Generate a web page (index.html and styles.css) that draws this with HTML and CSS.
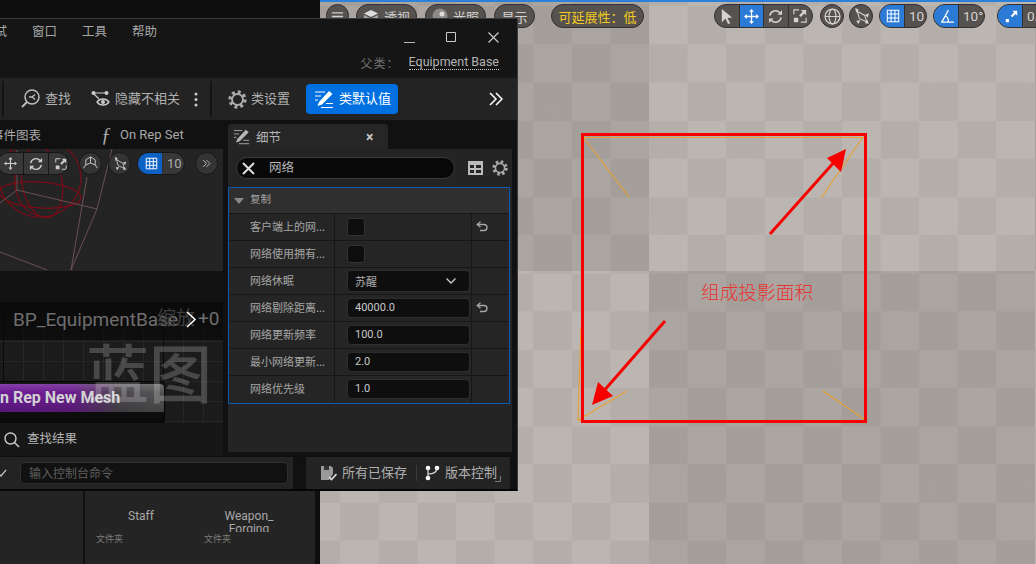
FILE: index.html
```html
<!DOCTYPE html>
<html lang="zh">
<head>
  <meta charset="UTF-8" />
  <title>Equipment Base</title>
  <link rel="stylesheet" href="styles.css">
</head>
<body>
  <!-- icon sprite -->
  <svg class="sprite" xmlns="http://www.w3.org/2000/svg">
    <symbol id="i-move" viewBox="0 0 16 16"><path d="M8 2v12M2 8h12" fill="none" stroke="currentColor" stroke-width="1.4"/><path d="M8 0l2.6 3H5.4zM8 16l-2.6-3h5.2zM0 8l3-2.6v5.2zM16 8l-3 2.6V5.4z" fill="currentColor"/></symbol>
    <symbol id="i-rotate" viewBox="0 0 16 16"><path d="M2 7a6 6 0 0 1 10.5-3M14 9a6 6 0 0 1-10.5 3" fill="none" stroke="currentColor" stroke-width="1.6"/><path d="M15 1v5h-5zM1 15v-5h5z" fill="currentColor"/></symbol>
    <symbol id="i-scale" viewBox="0 0 16 16"><path d="M1 6V1h6M15 10v5H9" fill="none" stroke="currentColor" stroke-width="1.3"/><path d="M1 10h5v5H1zM15 1v6l-2-2-4 4-2-2 4-4-2-2z" fill="currentColor"/></symbol>
    <symbol id="i-select" viewBox="0 0 16 16"><path d="M3 0l11 9-5 .6 3 5.6-2.4 .8-2.6-5.8L3 14z" fill="currentColor"/></symbol>
    <symbol id="i-surface" viewBox="0 0 16 16"><path d="M8 1l5 3v5.500L8 7.500 3 9.500V4zM8 7.500V1M3 9.500L.5 13M13 9.500l2.500 3.500" fill="none" stroke="currentColor" stroke-width="1"/></symbol>
    <symbol id="i-nodes" viewBox="0 0 16 16"><path d="M4 3l7 4 2 6-7-3z" fill="none" stroke="currentColor" stroke-width="1"/><path d="M2 0l3.500 1.500L3 4.500zM15 5l-1 4-3-2.500zM15 15l-4-1 2.500-3zM3 12l4-.5-2 3.500z" fill="currentColor"/></symbol>
    <symbol id="i-grid" viewBox="0 0 16 16"><path d="M1.5 1.5h13v13h-13zM1.5 5.8h13M1.5 10.2h13M5.8 1.5v13M10.2 1.5v13" fill="none" stroke="currentColor" stroke-width="1.2"/></symbol>
    <symbol id="i-angle" viewBox="0 0 16 16"><path d="M1 14h14M2 14L9 1M6 7.5c2 1 3 3.5 3 6.5" fill="none" stroke="currentColor" stroke-width="1.4"/></symbol>
    <symbol id="i-scalesnap" viewBox="0 0 16 16"><path d="M1 11h4v4H1zM15 1v6l-2-2-4 4-2-2 4-4-2-2z" fill="currentColor"/></symbol>
    <symbol id="i-globe" viewBox="0 0 16 16"><circle cx="8" cy="8" r="7" fill="none" stroke="currentColor" stroke-width="1.2"/><ellipse cx="8" cy="8" rx="3.2" ry="7" fill="none" stroke="currentColor" stroke-width="1.1"/><path d="M1 8h14" stroke="currentColor" stroke-width="1.1"/></symbol>
    <symbol id="i-chev" viewBox="0 0 16 16"><path d="M2 2l6 6-6 6M8 2l6 6-6 6" fill="none" stroke="currentColor" stroke-width="1.5"/></symbol>
    <symbol id="i-gear" viewBox="0 0 16 16"><circle cx="8" cy="8" r="6" fill="none" stroke="currentColor" stroke-width="3.4" stroke-dasharray="2.4 2.31"/><circle cx="8" cy="8" r="4.6" fill="none" stroke="currentColor" stroke-width="1.6"/></symbol>
    <symbol id="i-pencil" viewBox="0 0 20 20"><path d="M5 13L15 2l3.5 3L8 15.5 3.5 17z" fill="currentColor"/><path d="M1 3h10M1 7h6M1 11h3M7 18.500h12M12 14.500h7" fill="none" stroke="currentColor" stroke-width="1"/></symbol>
    <symbol id="i-undo" viewBox="0 0 12 12"><path d="M1.500 3.500h6.500a3 3 0 0 1 0 6H4" fill="none" stroke="currentColor" stroke-width="1.3"/><path d="M4.500 .8L1.300 3.500l3.200 2.700" fill="none" stroke="currentColor" stroke-width="1.3"/></symbol>
  </svg>

  <div class="desktop">
    <!-- level viewport -->
    <div class="viewport">
      <div class="vp-bar">
        <span class="pill round menu-btn"><svg class="ic" width="13" height="13" viewBox="0 0 14 14"><path d="M1 3h12M1 7h12M1 11h12" stroke="currentColor" stroke-width="1.400"/></svg></span>
        <span class="pill txt"><svg class="ic" width="16" height="16" viewBox="0 0 16 16"><path d="M8 2l7 3.500-7 3.500-7-3.500z" fill="#ddd"/><path d="M1 7l7 3.500L15 7v3l-7 4-7-4z" fill="#aaa"/></svg>透视</span>
        <span class="pill txt"><svg class="ic" width="16" height="16" viewBox="0 0 16 16"><circle cx="8" cy="8" r="7.500" fill="#8d8a88"/><circle cx="10" cy="6" r="2.500" fill="#ddd"/></svg>光照</span>
        <span class="pill txt show">显示</span>
        <span class="pill txt warn">可延展性：低</span>
        <span class="pill tools">
          <span class="seg"><svg width="15" height="15"><use href="#i-select"/></svg></span>
          <span class="seg on"><svg width="15" height="15"><use href="#i-move"/></svg></span>
          <span class="seg"><svg width="15" height="15"><use href="#i-rotate"/></svg></span>
          <span class="seg"><svg width="14" height="14"><use href="#i-scale"/></svg></span>
        </span>
        <span class="pill round"><svg width="17" height="17"><use href="#i-globe"/></svg></span>
        <span class="pill round"><svg width="17" height="17"><use href="#i-nodes"/></svg></span>
        <span class="pill snap"><span class="seg on"><svg width="14" height="14"><use href="#i-grid"/></svg></span><span class="val">10</span></span>
        <span class="pill snap"><span class="seg on"><svg width="15" height="15"><use href="#i-angle"/></svg></span><span class="val">10°</span></span>
        <span class="pill snap wide"><span class="seg on"><svg width="13" height="13"><use href="#i-scalesnap"/></svg></span><span class="val">0.25</span></span>
      </div>

      <!-- annotation drawn over the viewport -->
      <svg class="markup" width="716" height="564" viewBox="320 0 716 564">
        <g fill="none" stroke="#e8a030" stroke-width="1.100">
          <path d="M583 137.500H864.500V419"/>
          <path d="M578 420.500H864"/>
          <path d="M583 137L629 197M863 137L821 198M864 419L823 391M578 420L627 391M578 420L581 327"/>
        </g>
        <rect x="582.500" y="134.500" width="283" height="287" fill="none" stroke="#f60000" stroke-width="3"/>
        <g stroke="#f60000" stroke-width="3">
          <path d="M770 234L836 160"/>
          <path d="M665 321L602 393"/>
        </g>
        <path d="M846 149L841 172L827 158zM592 405L598 382L613 396z" fill="#f60000"/>
      </svg>
      <span class="note">组成投影面积</span>
    </div>

    <!-- content browser behind the window -->
    <div class="browser">
      <div class="tile narrow"></div>
      <div class="tile">
        <div class="asset"><span class="asset-name">Staff</span><span class="asset-kind">文件夹</span></div>
        <div class="asset"><span class="asset-name">Weapon_<br>Forging</span><span class="asset-kind">文件夹</span></div>
      </div>
    </div>

    <!-- blueprint editor window -->
    <div class="window">
      <div class="titlebar">
        <div class="menu"><span>调试</span><span>窗口</span><span>工具</span><span>帮助</span></div>
        <div class="title-right">
          <div class="win-btns">
            <svg width="11" height="11" viewBox="0 0 11 11"><path d="M0 10.500h11" stroke="#bbb"/></svg>
            <svg width="11" height="11" viewBox="0 0 11 11"><path d="M.5 .5h9v9h-9z" fill="none" stroke="#ccc"/></svg>
            <svg width="11" height="11" viewBox="0 0 11 11"><path d="M.5 .5l10 10M10.500 .5l-10 10" stroke="#ccc" stroke-width="1.200"/></svg>
          </div>
          <div class="parent">父类：<span class="parent-link">Equipment Base</span></div>
        </div>
      </div>

      <div class="toolbar">
        <span class="tb-sep first"></span>
        <span class="tb-item find"><svg width="19" height="20" viewBox="0 0 19 20"><circle cx="11" cy="8" r="7" fill="none" stroke="#bbb" stroke-width="1.500"/><path d="M6 13l-5 5" stroke="#bbb" stroke-width="2"/><path d="M8 8h3l3-2.500M11 8l3 2.500" fill="none" stroke="#bbb" stroke-width="1.400"/></svg><span class="lbl">查找</span></span>
        <span class="tb-item hide"><svg width="20" height="18" viewBox="0 0 20 18"><circle cx="2.500" cy="3" r="2" fill="#ccc"/><circle cx="15.500" cy="3" r="2" fill="#ccc"/><path d="M3 3h12M3 4l5 5" stroke="#ccc" stroke-width="1.200" fill="none"/><path d="M6 12c3-4 9-4 12 0-3 4-9 4-12 0z" fill="none" stroke="#ccc" stroke-width="1.300"/><circle cx="12" cy="12" r="2" fill="#ccc"/></svg><span class="lbl">隐藏不相关</span></span>
        <svg class="dots" width="4" height="15" viewBox="0 0 4 15"><circle cx="2" cy="2" r="1.500" fill="#ccc"/><circle cx="2" cy="7.500" r="1.500" fill="#ccc"/><circle cx="2" cy="13" r="1.500" fill="#ccc"/></svg>
        <span class="tb-sep second"></span>
        <span class="tb-item gear"><svg class="gear-ic" width="19" height="19"><use href="#i-gear"/></svg><span class="lbl">类设置</span></span>
        <span class="tb-active"><svg width="20" height="20"><use href="#i-pencil"/></svg><span class="lbl">类默认值</span></span>
        <svg class="more" width="16" height="16"><use href="#i-chev"/></svg>
      </div>

      <div class="main">
        <div class="left">
          <div class="tabs">
            <span class="tab-a">事件图表</span>
            <span class="tab-b"><i>ƒ</i>On Rep Set</span>
          </div>

          <div class="preview">
            <svg class="wire" width="223" height="122" viewBox="0 149 223 122">
              <g fill="none" stroke="#7a0c16" stroke-width="1.200">
                <ellipse cx="40" cy="178" rx="41" ry="39"/>
                <ellipse cx="40" cy="195" rx="41" ry="13" transform="rotate(4 40 195)"/>
                <ellipse cx="42" cy="182" rx="20" ry="36" transform="rotate(-10 42 182)"/>
                <path d="M15 150v30c0 20 10 35 30 37"/>
              </g>
              <g fill="none" stroke="#6b5055" stroke-width="1">
                <path d="M17 150V190L97 209M112 149L97 209L71 270M87 177L71 270M17 190L0 203M0 252L47 270"/>
              </g>
            </svg>
            <div class="pv-bar">
              <span class="pill dark move-tools">
                <span class="seg"><svg width="13" height="13"><use href="#i-move"/></svg></span>
                <span class="seg"><svg width="14" height="14"><use href="#i-rotate"/></svg></span>
                <span class="seg"><svg width="12" height="12"><use href="#i-scale"/></svg></span>
              </span>
              <span class="pill dark round"><svg width="15" height="15"><use href="#i-surface"/></svg></span>
              <span class="pill dark round"><svg width="14" height="14"><use href="#i-nodes"/></svg></span>
              <span class="pill dark snap"><span class="seg on"><svg width="13" height="13"><use href="#i-grid"/></svg></span><span class="val">10</span></span>
              <span class="pill dark round"><svg width="9" height="9"><use href="#i-chev"/></svg></span>
            </div>
          </div>

          <div class="graph">
            <div class="graph-head"><span class="bp-name">BP_EquipmentBase</span><span class="zoom-label">缩放<em>+0</em></span></div>
            <svg class="crumb" width="11" height="17" viewBox="0 0 11 17"><path d="M1 1l8 7.500-8 7.500" fill="none" stroke="#fff" stroke-width="1.500"/></svg>
            <div class="node"><div class="node-head">n Rep New Mesh</div></div>
            <span class="watermark">蓝图</span>
          </div>

          <div class="results"><svg width="16" height="16" viewBox="0 0 16 16"><circle cx="6.500" cy="6.500" r="5.500" fill="none" stroke="#ccc" stroke-width="1.400"/><path d="M10.500 10.500L15 15" stroke="#ccc" stroke-width="1.500"/></svg><span class="lbl">查找结果</span></div>
        </div>

        <div class="right">
          <div class="detail-tab"><svg width="17" height="17"><use href="#i-pencil"/></svg><span class="lbl small">细节</span><b>×</b></div>
          <div class="details">
            <div class="search-row">
              <div class="search"><svg width="13" height="13" viewBox="0 0 13 13"><path d="M1 1l11 11M12 1L1 12" stroke="#ddd" stroke-width="2"/></svg><span class="lbl">网络</span></div>
              <svg width="15" height="14" viewBox="0 0 15 14"><path d="M0 0h15v14H0zM2 4v3h4V4zm6 0v3h5V4zM2 9v3h4V9zm6 0v3h5V9z" fill="#bbb" fill-rule="evenodd"/></svg>
              <svg class="gear-ic" width="16" height="16"><use href="#i-gear"/></svg>
            </div>
            <div class="category">
              <div class="cat-head"><i></i><span class="lbl">复制</span></div>
              <div class="prop"><span class="p-name">客户端上的网...</span><span class="p-val"><span class="check"></span></span><span class="p-reset"><svg width="12" height="12"><use href="#i-undo"/></svg></span></div>
              <div class="prop"><span class="p-name">网络使用拥有...</span><span class="p-val"><span class="check"></span></span><span class="p-reset"></span></div>
              <div class="prop"><span class="p-name">网络休眠</span><span class="p-val"><span class="input combo">苏醒<svg width="10" height="6" viewBox="0 0 10 6"><path d="M.5 .5L5 5 9.500 .5" fill="none" stroke="#ccc" stroke-width="1.300"/></svg></span></span><span class="p-reset"></span></div>
              <div class="prop"><span class="p-name">网络剔除距离...</span><span class="p-val"><span class="input">40000.0</span></span><span class="p-reset"><svg width="12" height="12"><use href="#i-undo"/></svg></span></div>
              <div class="prop"><span class="p-name">网络更新频率</span><span class="p-val"><span class="input">100.0</span></span><span class="p-reset"></span></div>
              <div class="prop"><span class="p-name">最小网络更新...</span><span class="p-val"><span class="input">2.0</span></span><span class="p-reset"></span></div>
              <div class="prop"><span class="p-name">网络优先级</span><span class="p-val"><span class="input">1.0</span></span><span class="p-reset"></span></div>
            </div>
          </div>
        </div>
      </div>

      <div class="statusbar">
        <div class="console">
          <svg width="9" height="8" viewBox="0 0 9 8"><path d="M0 4l3 3 5-6" fill="none" stroke="#bbb" stroke-width="1.400"/></svg>
          <div class="console-input">输入控制台命令</div>
        </div>
        <div class="status-right">
          <span class="st-item"><svg width="16" height="15" viewBox="0 0 16 15"><path d="M0 0h10l2 2v6l-4 6H0z" fill="#9a9a9a"/><path d="M3 0h5v4H3z" fill="#333"/><path d="M8 11l2.500 2.500L15.500 8" fill="none" stroke="#ddd" stroke-width="1.700"/></svg><span class="lbl">所有已保存</span></span>
          <span class="st-sep"></span>
          <span class="st-item"><svg width="15" height="16" viewBox="0 0 15 16"><circle cx="3" cy="3" r="2.300" fill="#fff"/><circle cx="3" cy="13" r="2.300" fill="#fff"/><circle cx="12" cy="3" r="2.300" fill="#fff"/><path d="M3 3v10M3 9c5 0 9-1 9-6" fill="none" stroke="#ddd" stroke-width="1.200"/></svg><span class="lbl">版本控制</span></span>
          <svg class="grip" width="6" height="6" viewBox="0 0 6 6"><path d="M0 5.500h5.500V0" fill="none" stroke="#777"/></svg>
        </div>
      </div>
    </div>
  </div>
</body>
</html>
```
FILE: styles.css
```css
* {
  box-sizing: border-box;
}

html, body {
  margin: 0;
  padding: 0;
  overflow: hidden;
}

body {
  font-family: "Noto Sans CJK SC", sans-serif;
  background: #0f0f0f;
  color: #b5b5b5;
}

.sprite {
  position: absolute;
  width: 0;
  height: 0;
}

.lbl {
  margin-top: -4px;
}

.lbl.small {
  margin-top: -1px;
}

.desktop {
  position: relative;
  width: 1036px;
  height: 564px;
  overflow: hidden;
  background: #0f0f0f;
}

/* ---- level viewport ---- */
.viewport {
  position: absolute;
  left: 320px;
  top: 0;
  width: 716px;
  height: 564px;
  border-top: 2px solid #2b80dc;
  background-color: #bcb6b2;
  background-image:
    conic-gradient(transparent 25%, rgba(40, 30, 28, 0.05) 0 50%, transparent 0 75%, rgba(40, 30, 28, 0.05) 0),
    conic-gradient(transparent 25%, rgba(40, 30, 28, 0.11) 0 50%, transparent 0 75%, rgba(40, 30, 28, 0.11) 0);
  background-size: 77.2px 76.4px, 772px 764px;
  background-position: 290.400px 233px, -57px -113px;
}

.vp-bar {
  display: flex;
  align-items: center;
  gap: 7px;
  padding: 2px 0 0 6px;
  width: 760px;
}

.pill {
  display: inline-flex;
  align-items: center;
  justify-content: center;
  flex: none;
  height: 24px;
  border-radius: 12px;
  border: 1px solid #33302f;
  background: #565250;
  color: #d4d2d0;
  font-family: Roboto, "Noto Sans CJK SC", sans-serif;
  font-size: 13px;
  overflow: hidden;
}

.pill.round {
  width: 24px;
}

.pill.menu-btn {
  width: 23px;
}

.pill.txt {
  width: 61px;
  gap: 5px;
}

.pill.txt:nth-child(3),
.pill.show {
  margin-left: 1px;
}

.pill.show {
  width: 41px;
}

.pill.warn {
  margin-left: 9px;
  width: 93px;
  color: #f2cb1d;
}

.pill.tools {
  margin-left: 63px;
  width: 99px;
}

.seg {
  display: flex;
  align-items: center;
  justify-content: center;
  height: 100%;
  flex: 1;
  border-left: 1px solid #33302f;
}

.seg:first-child {
  border-left: none;
}

.seg.on {
  background: #2a7ad6;
  color: #fff;
}

.snap {
  width: 49px;
  justify-content: flex-start;
}

.snap .seg {
  flex: none;
  width: 24px;
  padding-left: 2px;
}

.snap .val {
  padding-left: 4px;
  border-left: 1px solid #33302f;
  line-height: 22px;
  font-size: 13.500px;
}

.vp-bar .round + .round {
  margin-left: -2px;
}

.vp-bar .snap:nth-child(9) {
  width: 48px;
  margin-left: -1px;
}

.vp-bar .snap:nth-child(10) {
  width: 52px;
  margin-left: -1px;
}

.vp-bar .snap.wide {
  width: 70px;
  margin-left: 5px;
}

.markup {
  position: absolute;
  left: 0;
  top: -2px;
}

.note {
  position: absolute;
  left: 381px;
  top: 276px;
  font-size: 18.700px;
  line-height: 26px;
  font-weight: 300;
  color: #e8322e;
}

/* ---- content browser ---- */
.browser {
  position: absolute;
  left: 0;
  top: 491px;
  width: 315px;
  height: 73px;
  display: flex;
  gap: 2px;
  background: #111;
}

.tile {
  flex: 1;
  display: flex;
  padding-left: 2px;
  background: #242424;
}

.tile.narrow {
  flex: none;
  width: 83px;
}

.asset {
  position: relative;
  width: 108px;
  padding-top: 19px;
  text-align: center;
  font-family: Roboto, sans-serif;
  font-size: 12px;
  line-height: 13px;
  color: #a8a8a8;
}

.asset-name {
  display: block;
  height: 22px;
  overflow: hidden;
}

.asset-kind {
  position: absolute;
  left: 9px;
  top: 41px;
  font-family: "Noto Sans CJK SC", sans-serif;
  font-size: 9px;
  color: #7c7c7c;
}

/* ---- editor window ---- */
.window {
  position: absolute;
  left: 0;
  top: 18px;
  width: 518px;
  height: 473px;
  display: flex;
  flex-direction: column;
  background: #111;
  border-top: 1px solid #3a3a3a;
  border-right: 1px solid #3a3a3a;
  border-bottom: 2px solid #060606;
  overflow: hidden;
}

.titlebar {
  height: 59px;
  display: flex;
  justify-content: space-between;
  background: #151515;
}

.menu {
  display: flex;
  gap: 25px;
  margin-left: -18px;
  padding-top: 3px;
  font-size: 12.500px;
  line-height: 18px;
  color: #a6a6a6;
}

.title-right {
  width: 150px;
  padding-top: 13px;
  margin-right: 18px;
}

.win-btns {
  display: flex;
  justify-content: flex-end;
  gap: 31px;
  height: 11px;
}

.parent {
  margin-top: 11px;
  display: flex;
  justify-content: flex-end;
  font-size: 12px;
  line-height: 17px;
  letter-spacing: 1px;
  color: #6f6f6f;
}

.parent-link {
  margin-left: 9px;
  font-family: Roboto, sans-serif;
  font-size: 12.500px;
  letter-spacing: 0;
  color: #b4b4b4;
  border-bottom: 1px dotted #ccc;
  line-height: 15px;
  height: 16px;
}

.toolbar {
  position: relative;
  height: 42px;
  display: flex;
  align-items: center;
  background: #232323;
  font-size: 13px;
  color: #b0b0b0;
}

.tb-sep {
  width: 2px;
  height: 36px;
  background: #141414;
  flex: none;
}

.tb-sep.first {
  margin-left: 2px;
}

.tb-sep.second {
  margin-left: 12px;
}

.tb-item {
  display: flex;
  align-items: center;
  gap: 5px;
  flex: none;
}

.tb-item.find {
  margin-left: 17px;
  width: 66px;
}

.tb-item.hide {
  margin-left: 4px;
  gap: 4px;
}

.dots {
  margin-left: 14px;
  flex: none;
}

.tb-item.gear {
  margin-left: 16px;
  gap: 4px;
}

.gear-ic {
  color: #aaa;
  flex: none;
}

.tb-active {
  margin-left: 16px;
  width: 92px;
  height: 30px;
  display: flex;
  align-items: center;
  gap: 5px;
  padding-left: 8px;
  border-radius: 4px;
  background: #0070e0;
  color: #fff;
  flex: none;
}

.more {
  margin-left: 90px;
  color: #fff;
  flex: none;
}

.main {
  display: flex;
  height: 336px;
}

.left {
  width: 223px;
  flex: none;
  display: flex;
  flex-direction: column;
}

.tabs {
  height: 29px;
  display: flex;
  align-items: center;
  font-size: 12.500px;
  color: #a8a8a8;
  overflow: hidden;
}

.tab-a {
  margin-left: -9px;
  flex: none;
}

.tab-b {
  margin-left: 60px;
  font-family: Roboto, sans-serif;
  font-size: 13px;
  display: flex;
  align-items: center;
  gap: 9px;
}

.tab-b i {
  font-family: "Liberation Serif", serif;
  font-size: 20px;
  line-height: 18px;
}

.preview {
  position: relative;
  height: 122px;
  background: #242424;
  overflow: hidden;
}

.wire {
  position: absolute;
  left: 0;
  top: 0;
}

.pv-bar {
  position: relative;
  display: flex;
  align-items: center;
  gap: 7px;
  padding-top: 3px;
}

.pill.dark {
  height: 23px;
  background: #383838;
  border-color: #161616;
  color: #ccc;
}

.pill.dark.round {
  width: 23px;
  background: #343434;
}

.pill.dark .seg {
  border-color: #161616;
}

.pill.dark .seg.on {
  background: #0b62c4;
}

.move-tools {
  width: 72px;
  margin-left: -3px;
  justify-content: flex-start;
}

.move-tools .seg {
  width: 25px;
  flex: none;
}

.move-tools + .round {
  margin-left: 3px;
}

.pill.dark.snap {
  width: 48px;
  margin-left: -1px;
}

.pill.dark.snap .seg {
  width: 24px;
}

.pill.dark.snap .val {
  font-size: 13px;
  line-height: 21px;
  color: #aaa;
}

.pv-bar .round + .round {
  margin-left: -1px;
}

.pv-bar .snap + .round {
  margin-left: 3px;
}

.graph {
  position: relative;
  margin-top: 31px;
  height: 121px;
  background-color: #1b1b1b;
  background-image:
    linear-gradient(90deg, #0a0a0a 1px, transparent 1px),
    linear-gradient(#262626 1px, transparent 1px),
    linear-gradient(90deg, #262626 1px, transparent 1px);
  background-size: 160px 100%, 20px 20px, 20px 20px;
  background-position: 3px 0, 3px -1px, 3px -1px;
  overflow: hidden;
}

.graph-head {
  height: 38px;
  padding-bottom: 4px;
  display: flex;
  align-items: center;
  background: linear-gradient(rgba(8, 8, 8, 0.9), rgba(8, 8, 8, 0.65));
}

.bp-name {
  margin-left: 13px;
  font-family: Roboto, sans-serif;
  font-size: 19px;
  color: #6e6e6e;
}

.zoom-label {
  position: absolute;
  left: 157px;
  top: 2px;
  font-size: 19px;
  line-height: 26px;
  color: #404040;
  white-space: nowrap;
}

.zoom-label em {
  font-family: Roboto, sans-serif;
  font-style: normal;
  color: #6e6e6e;
  margin-left: 3px;
}

.crumb {
  position: absolute;
  left: 186px;
  top: 9px;
}

.node {
  position: absolute;
  left: -40px;
  top: 79px;
  width: 205px;
  height: 44px;
  padding-top: 2px;
  border-radius: 5px;
  background: linear-gradient(#161616, #0a0a0a);
  border: 1px solid #040404;
}

.node-head {
  height: 28px;
  padding-left: 39px;
  font-family: Roboto, sans-serif;
  font-weight: 700;
  font-size: 16px;
  line-height: 28px;
  color: #d2d2d2;
  border-radius: 4px 4px 0 0;
  background:
    linear-gradient(rgba(255, 255, 255, 0.16), rgba(255, 255, 255, 0) 30%, rgba(0, 0, 0, 0.2)),
    linear-gradient(90deg, #6d1a9c, #6c1f8f 55%, #4d4a50 78%, #555 100%);
}

.watermark {
  position: absolute;
  left: 86px;
  top: 24px;
  font-size: 63px;
  line-height: 88px;
  font-weight: 500;
  color: rgba(255, 255, 255, 0.2);
  white-space: nowrap;
}

.results {
  height: 33px;
  display: flex;
  align-items: center;
  gap: 7px;
  padding-left: 4px;
  background: #171717;
  font-size: 12.500px;
  color: #b4b4b4;
}

.right {
  margin-left: 5px;
  width: 284px;
  padding-top: 4px;
}

.detail-tab {
  width: 160px;
  height: 25px;
  display: flex;
  align-items: center;
  padding-left: 5px;
  gap: 6px;
  border-radius: 4px 4px 0 0;
  background: #262626;
  font-size: 12.500px;
  color: #b5b5b5;
}

.detail-tab b {
  margin-left: 79px;
  font-family: Roboto, sans-serif;
  font-size: 14px;
  font-weight: 700;
  line-height: 18px;
  color: #c4c4c4;
}

.details {
  height: 303px;
  background: #242424;
}

.search-row {
  height: 38px;
  display: flex;
  align-items: center;
  padding-left: 8px;
  gap: 13px;
}

.search-row .gear-ic {
  margin-left: -4px;
}

.search {
  width: 219px;
  height: 22px;
  display: flex;
  align-items: center;
  gap: 14px;
  padding-left: 5px;
  border-radius: 11px;
  background: #090909;
  border: 1px solid #3a3a3a;
  font-size: 12.500px;
  color: #b4b4b4;
}

.category {
  width: 282px;
  height: 217px;
  border: 1px solid #0a5cb0;
  background: #252525;
}

.cat-head {
  height: 25px;
  display: flex;
  align-items: center;
  gap: 6px;
  padding-left: 5px;
  background: #2f2f2f;
  font-size: 10.500px;
  color: #a8a8a8;
}

.cat-head i {
  width: 0;
  height: 0;
  border-left: 5px solid transparent;
  border-right: 5px solid transparent;
  border-top: 6px solid #888;
}

.prop {
  height: 27px;
  display: grid;
  grid-template-columns: 105px 138px 1fr;
  border-top: 1px solid #171717;
  font-size: 11px;
  color: #a6a6a6;
}

.p-name {
  padding-left: 21px;
  line-height: 24px;
  white-space: nowrap;
  overflow: hidden;
}

.p-val {
  display: flex;
  align-items: center;
  padding-left: 12px;
  border-left: 1px solid #171717;
  border-right: 1px solid #171717;
}

.p-reset {
  display: flex;
  align-items: center;
  padding-left: 4px;
  color: #a8a8a8;
}

.check {
  width: 18px;
  height: 18px;
  border-radius: 3px;
  background: #0e0e0e;
  border: 1px solid #333;
}

.input {
  width: 123px;
  height: 20px;
  padding: 0 0 1px 7px;
  display: flex;
  align-items: center;
  justify-content: space-between;
  border-radius: 4px;
  background: #0e0e0e;
  border: 1px solid #2e2e2e;
  font-family: Roboto, "Noto Sans CJK SC", sans-serif;
  font-size: 11px;
  color: #c8c8c8;
}

.combo {
  height: 22px;
  color: #aaa;
  padding-right: 13px;
}

.statusbar {
  flex: 1;
  display: flex;
  border-top: 1px solid #0e0e0e;
  background: #111;
}

.console {
  width: 297px;
  display: flex;
  align-items: center;
  gap: 13px;
  background: #232323;
  flex: none;
  margin-left: -2px;
  border-right: 2px solid #111;
}

.console-input {
  width: 268px;
  height: 22px;
  padding-left: 8px;
  border-radius: 4px;
  background: #111;
  border: 1px solid #2e2e2e;
  font-size: 12px;
  line-height: 19px;
  color: #5f5f5f;
}

.status-right {
  position: relative;
  margin-left: 11px;
  width: 204px;
  display: flex;
  align-items: center;
  gap: 9px;
  padding-left: 15px;
  background: #242424;
  font-size: 13px;
  color: #b0b0b0;
  flex: none;
}

.st-item {
  display: flex;
  align-items: center;
  gap: 5px;
  flex: none;
}

.st-sep {
  width: 1px;
  height: 16px;
  background: #3c3c3c;
  flex: none;
}

.st-sep + .st-item {
  margin-left: -1px;
}

.grip {
  position: absolute;
  right: 9px;
  bottom: 7px;
}
```
